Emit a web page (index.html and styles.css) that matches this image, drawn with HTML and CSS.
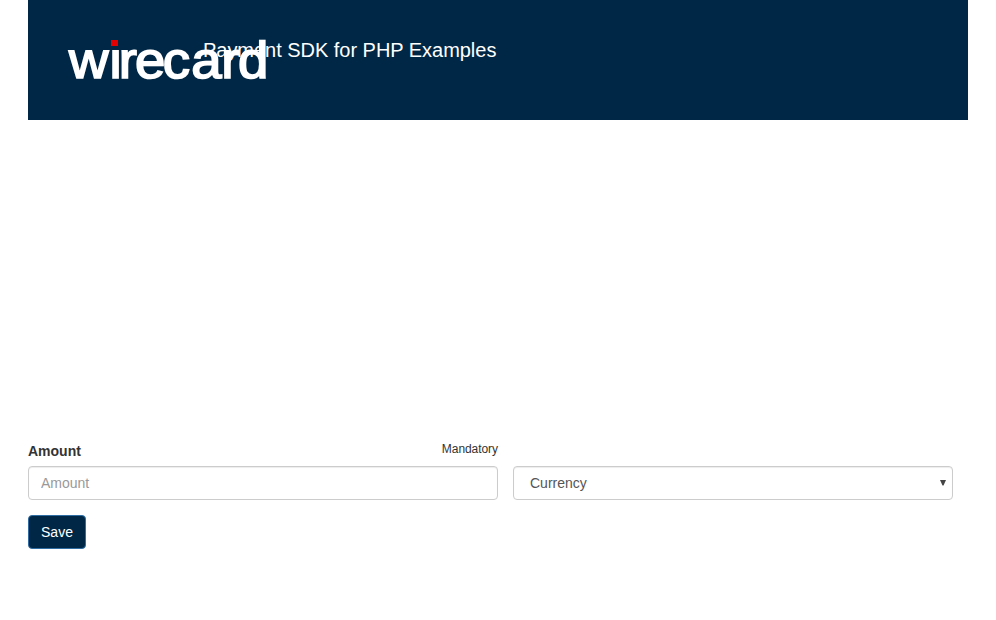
FILE: index.html
```html
<!DOCTYPE html>
<html lang="en">
<head>
<meta charset="utf-8">
<title>Payment SDK for PHP Examples</title>
<link rel="stylesheet" href="styles.css">
</head>
<body>
<div class="container">
  <header class="header">
    <div class="logo">
      <svg class="wordmark" width="200" height="46" viewBox="0 0 200 46" role="img" aria-label="wirecard">
        <text class="letters" transform="translate(0 40.3) scale(1.06 1)" y="0" x="0.9 37.8 47.9 63.3 89.5 116.4 144.7 160.4">wırecard</text>
        <path d="M43 2h7v6h-7z" fill="#e20000"/>
      </svg>
    </div>
    <h1 class="title">Payment SDK for PHP Examples</h1>
  </header>
  <form class="form">
    <div class="row">
      <div class="amount">
        <div class="labels"><label for="amount">Amount</label><span class="hint">Mandatory</span></div>
        <input id="amount" class="control" type="text" placeholder="Amount">
      </div>
      <div class="control currency"><span>Currency</span><svg class="arrow" width="6" height="6" viewBox="0 0 6 6"><path d="M0 0h6L3.5 5.5h-1z" fill="#444"/></svg></div>
    </div>
    <button class="save" type="button">Save</button>
  </form>
</div>
</body>
</html>
```
FILE: styles.css
```css
* { box-sizing: border-box; }
body { margin: 0; background: #fff; color: #333; font: 14px/20px "Liberation Sans", Arial, sans-serif; }
.container { width: 940px; margin: 0 28px; }
.header { height: 120px; padding: 38px 40px; background: #002846; display: flex; color: #fff; }
.logo { width: 135px; flex: none; }
.wordmark { display: block; overflow: visible; }
.letters { font: 51.5px "Liberation Sans", Arial, sans-serif; fill: #fff; stroke: #fff; stroke-width: 1.7px; text-rendering: geometricPrecision; }
.title { margin: 0; font-size: 20px; font-weight: 400; line-height: 24px; letter-spacing: -0.03px; white-space: nowrap; }
.form { padding-top: 321px; }
.row { display: flex; gap: 15px; align-items: flex-end; }
.amount { width: 470px; }
.labels { display: flex; justify-content: space-between; margin-bottom: 5px; }
.labels label { font-weight: 700; }
.hint { font-size: 12px; line-height: 16px; letter-spacing: -0.06px; }
.control { display: block; width: 100%; height: 34px; padding: 6px 12px; border: 1px solid #ccc; border-radius: 4px; background: #fff; color: #555; font: inherit; box-shadow: inset 0 1px 1px rgba(0,0,0,.075); }
.control::placeholder { color: #999; }
.currency { width: 440px; display: flex; align-items: center; justify-content: space-between; padding: 6px 6px 6px 16px; }
.save { display: block; margin-top: 15px; width: 58px; height: 34px; padding: 0; border: 1px solid #2e6da4; border-radius: 4px; background: #002846; color: #fff; font: inherit; }
```
